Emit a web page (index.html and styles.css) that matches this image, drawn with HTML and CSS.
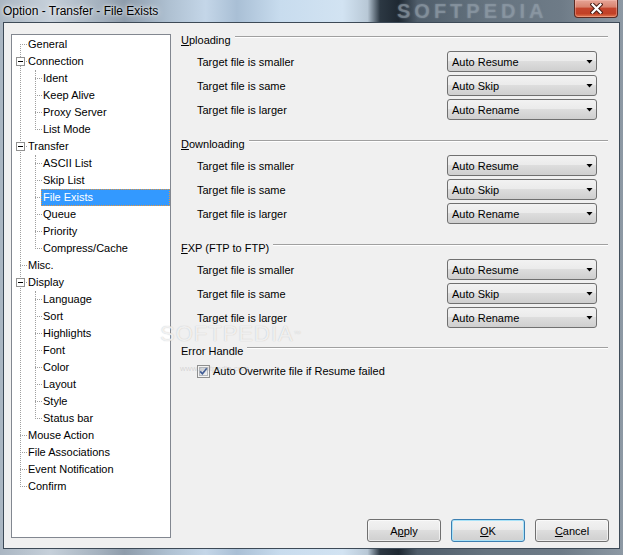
FILE: index.html
```html
<!DOCTYPE html>
<html lang="en">
<head>
    <meta charset="UTF-8">
    <title>Option - Transfer - File Exists</title>
    <link rel="stylesheet" href="styles.css">
</head>
<body>

<div class="window">
    <!-- Aero title bar -->
    <div class="titlebar">
        <span class="title">Option - Transfer - File Exists</span>
        <span class="title-mark">SOFTPEDIA</span>
        <div class="close-btn">
            <svg width="13" height="11" viewBox="0 0 13 11">
                <path d="M2.5 1.5 L10.5 9.5 M10.5 1.5 L2.5 9.5" stroke="#4a1d15" stroke-width="4.2" stroke-linecap="square"/>
                <path d="M2.5 1.5 L10.5 9.5 M10.5 1.5 L2.5 9.5" stroke="#ffffff" stroke-width="2.2" stroke-linecap="square"/>
            </svg>
        </div>
    </div>

    <div class="client">
        <!-- Option tree -->
        <div class="tree">
            <ul class="nodes">
                <li><span class="node">General</span></li>
                <li><span class="toggle"></span><span class="node">Connection</span>
                    <ul>
                        <li><span class="node">Ident</span></li>
                        <li><span class="node">Keep Alive</span></li>
                        <li><span class="node">Proxy Server</span></li>
                        <li><span class="node">List Mode</span></li>
                    </ul>
                </li>
                <li><span class="toggle"></span><span class="node">Transfer</span>
                    <ul>
                        <li><span class="node">ASCII List</span></li>
                        <li><span class="node">Skip List</span></li>
                        <li><span class="node sel">File Exists</span></li>
                        <li><span class="node">Queue</span></li>
                        <li><span class="node">Priority</span></li>
                        <li><span class="node">Compress/Cache</span></li>
                    </ul>
                </li>
                <li><span class="node">Misc.</span></li>
                <li><span class="toggle"></span><span class="node">Display</span>
                    <ul>
                        <li><span class="node">Language</span></li>
                        <li><span class="node">Sort</span></li>
                        <li><span class="node">Highlights</span></li>
                        <li><span class="node">Font</span></li>
                        <li><span class="node">Color</span></li>
                        <li><span class="node">Layout</span></li>
                        <li><span class="node">Style</span></li>
                        <li><span class="node">Status bar</span></li>
                    </ul>
                </li>
                <li><span class="node">Mouse Action</span></li>
                <li><span class="node">File Associations</span></li>
                <li><span class="node">Event Notification</span></li>
                <li><span class="node">Confirm</span></li>
            </ul>
        </div>

        <!-- File Exists page -->
        <div class="pages">
            <div class="group">
                <div class="group-head"><span><u>U</u>ploading</span><div class="rule"></div></div>
                <div class="opt-row"><span>Target file is smaller</span><div class="combo">Auto Resume<span class="caret"></span></div></div>
                <div class="opt-row"><span>Target file is same</span><div class="combo">Auto Skip<span class="caret"></span></div></div>
                <div class="opt-row"><span>Target file is larger</span><div class="combo">Auto Rename<span class="caret"></span></div></div>
            </div>

            <div class="group">
                <div class="group-head"><span><u>D</u>ownloading</span><div class="rule"></div></div>
                <div class="opt-row"><span>Target file is smaller</span><div class="combo">Auto Resume<span class="caret"></span></div></div>
                <div class="opt-row"><span>Target file is same</span><div class="combo">Auto Skip<span class="caret"></span></div></div>
                <div class="opt-row"><span>Target file is larger</span><div class="combo">Auto Rename<span class="caret"></span></div></div>
            </div>

            <div class="group">
                <div class="group-head"><span><u>F</u>XP (FTP to FTP)</span><div class="rule"></div></div>
                <div class="opt-row"><span>Target file is smaller</span><div class="combo">Auto Resume<span class="caret"></span></div></div>
                <div class="opt-row"><span>Target file is same</span><div class="combo">Auto Skip<span class="caret"></span></div></div>
                <div class="opt-row"><span>Target file is larger</span><div class="combo">Auto Rename<span class="caret"></span></div></div>
            </div>

            <div class="group last">
                <div class="group-head"><span>Error Handle</span><div class="rule"></div></div>
                <div class="check-row">
                    <svg class="check" width="13" height="13" viewBox="0 0 13 13">
                        <defs>
                            <linearGradient id="cb" x1="0" y1="0" x2="1" y2="1">
                                <stop offset="0" stop-color="#cbcfd5"/>
                                <stop offset="1" stop-color="#f6f6f6"/>
                            </linearGradient>
                        </defs>
                        <rect x="0.5" y="0.5" width="12" height="12" fill="#f4f4f4" stroke="#8e8f8f"/>
                        <rect x="2.5" y="2.5" width="8" height="8" fill="url(#cb)" stroke="#b4b8bd"/>
                        <path d="M3.2 6.4 L5.4 8.8 L9.8 3.2" fill="none" stroke="#3f5b95" stroke-width="1.7"/>
                    </svg>
                    <span>Auto Overwrite file if Resume failed</span>
                </div>
            </div>

            <div class="buttons">
                <button class="btn">A<u>p</u>ply</button>
                <button class="btn default"><u>O</u>K</button>
                <button class="btn"><u>C</u>ancel</button>
            </div>
        </div>

        <div class="watermark">SOFTPEDIA<sup>&trade;</sup></div>
        <div class="watermark-url">www.softpedia.com</div>
    </div>
</div>

</body>
</html>
```

FILE: styles.css
```css
body {
    margin: 0;
    font-family: "Liberation Sans", Arial, sans-serif;
    font-size: 11px;
    color: #000;
}
.window {
    width: 623px;
    height: 555px;
    box-sizing: border-box;
    padding: 0 3px 6px 3px;
    display: flex;
    flex-direction: column;
    overflow: hidden;
    background: linear-gradient(to right,
        #aab6c2 0%, #c6d0da 8%, #a4b1be 16%, #8e9cab 20%, #aec0d1 27%,
        #c4d6e8 33%, #a9bfd5 38%, #c8dcee 45%, #d2e3f2 55%, #b8c8d6 59%,
        #2c3843 61%, #1e2832 64%, #4f5d6a 67%, #65737f 78%, #6e7b87 90%, #8d99a4 100%);
}

/* title bar */
.titlebar {
    height: 22px;
    display: flex;
    align-items: flex-start;
    position: relative;
}
.title {
    font-size: 12px;
    line-height: 22px;
    position: relative;
    z-index: 1;
    text-shadow: 0 0 6px rgba(255, 255, 255, 0.9), 0 0 3px rgba(255, 255, 255, 0.8);
}
.title-mark {
    position: absolute;
    left: 394px;
    top: 1px;
    font-size: 20px;
    line-height: 20px;
    font-weight: bold;
    letter-spacing: 4px;
    color: rgba(150, 162, 173, 0.5);
    text-shadow: 0 0 2px rgba(150, 162, 173, 0.5);
}
.close-btn {
    margin-left: auto;
    margin-right: 2px;
    width: 44px;
    height: 18px;
    box-sizing: border-box;
    border: 1px solid #5b2a22;
    border-top: none;
    border-radius: 0 0 4px 4px;
    background: linear-gradient(#e6a496 0%, #d98470 40%, #c4452d 50%, #c24026 80%, #e27a52 100%);
    box-shadow: inset 0 0 0 1px rgba(255, 210, 200, 0.35);
    display: flex;
    align-items: center;
    justify-content: center;
    position: relative;
    z-index: 1;
}

/* dialog body */
.client {
    flex: 1;
    display: flex;
    gap: 10px;
    padding: 11px 10px 6px 7px;
    background: #f0f0f0;
    border: 1px solid #3d4a57;
    position: relative;
}

/* tree view */
.tree {
    width: 160px;
    flex: none;
    box-sizing: border-box;
    margin-bottom: 4px;
    padding-top: 1px;
    background: #fff;
    border: 1px solid #828790;
}
.nodes, .nodes ul {
    list-style: none;
    margin: 0;
    padding: 0;
    position: relative;
}
.nodes::before {
    content: "";
    position: absolute;
    left: 8px;
    top: 8px;
    bottom: 8px;
    border-left: 1px dotted #a0a0a0;
}
.nodes > li {
    position: relative;
    padding-left: 16px;
}
.nodes > li::before {
    content: "";
    position: absolute;
    left: 8px;
    top: 8px;
    width: 7px;
    border-top: 1px dotted #a0a0a0;
}
.nodes ul::before {
    content: "";
    position: absolute;
    left: 7px;
    top: 0;
    bottom: 8px;
    border-left: 1px dotted #a0a0a0;
}
.nodes ul > li {
    position: relative;
    padding-left: 15px;
}
.nodes ul > li::before {
    content: "";
    position: absolute;
    left: 7px;
    top: 8px;
    width: 7px;
    border-top: 1px dotted #a0a0a0;
}
.node {
    display: block;
    height: 17px;
    line-height: 17px;
    white-space: nowrap;
}
.node.sel {
    box-sizing: border-box;
    margin-left: -2px;
    padding-left: 1px;
    line-height: 15px;
    color: #fff;
    background: #3399ff;
    border: 1px dotted #e8963c;
}
.toggle {
    position: absolute;
    left: 4px;
    top: 4px;
    width: 9px;
    height: 9px;
    box-sizing: border-box;
    border: 1px solid #919191;
    background: #fff;
    z-index: 1;
}
.toggle::after {
    content: "";
    position: absolute;
    left: 1px;
    top: 3px;
    width: 5px;
    height: 1px;
    background: #000;
}

/* option page */
.pages {
    flex: 1;
    display: flex;
    flex-direction: column;
}
.group + .group {
    margin-top: 18px;
}
.group.last {
    margin-top: 17px;
}
.group-head {
    display: flex;
    height: 12px;
    line-height: 12px;
}
.group-head .rule {
    flex: 1;
    height: 0;
    margin: 2px 1px 0 4px;
    border-top: 1px solid #a0a0a0;
    border-bottom: 1px solid #fff;
}
.opt-row {
    display: grid;
    grid-template-columns: 250px 150px;
    align-items: center;
    height: 21px;
    margin-top: 3px;
    padding-left: 16px;
}
.group-head + .opt-row {
    margin-top: 5px;
}
.combo {
    height: 21px;
    box-sizing: border-box;
    display: flex;
    align-items: center;
    justify-content: space-between;
    padding: 0 3px 0 4px;
    border: 1px solid #707070;
    border-radius: 3px;
    background: linear-gradient(#f2f2f2 0%, #ebebeb 45%, #dddddd 50%, #cfcfcf 100%);
}
.caret {
    width: 7px;
    height: 4px;
    background: #000;
    clip-path: polygon(0 0, 100% 0, 50% 100%);
}
.check-row {
    display: flex;
    align-items: center;
    height: 16px;
    margin-top: 6px;
    padding-left: 16px;
    gap: 3px;
}

/* dialog buttons */
.buttons {
    margin-top: auto;
    display: flex;
    justify-content: flex-end;
    gap: 10px;
}
.btn {
    width: 74px;
    height: 23px;
    box-sizing: border-box;
    padding: 0;
    font-family: inherit;
    font-size: 11px;
    color: #000;
    border: 1px solid #707070;
    border-radius: 3px;
    background: linear-gradient(#f2f2f2 0%, #ebebeb 45%, #dddddd 50%, #cfcfcf 100%);
    box-shadow: inset 0 0 0 1px rgba(255, 255, 255, 0.6);
}
.btn.default {
    border-color: #3c7fb1;
    box-shadow: inset 0 0 0 1px #a8e2f8;
}

/* softpedia stamp */
.watermark {
    position: absolute;
    left: 156px;
    top: 303px;
    font-size: 22px;
    line-height: 16px;
    letter-spacing: 1px;
    color: rgba(255, 255, 255, 0.75);
    text-shadow: 0 0 1px rgba(120, 120, 120, 0.45);
    pointer-events: none;
}
.watermark sup {
    font-size: 7px;
    vertical-align: top;
}
.watermark-url {
    position: absolute;
    left: 176px;
    top: 342px;
    font-size: 8px;
    line-height: 8px;
    color: rgba(160, 160, 160, 0.35);
    pointer-events: none;
}
```
